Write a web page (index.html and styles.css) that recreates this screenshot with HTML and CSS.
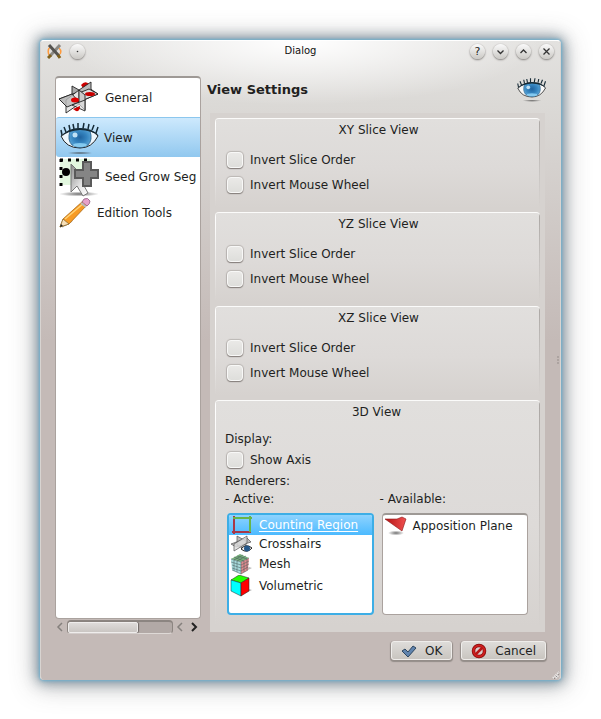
FILE: index.html
```html
<!DOCTYPE html>
<html lang="en">
<head>
<meta charset="utf-8">
<title>Dialog</title>
<link rel="stylesheet" href="styles.css">
</head>
<body>
<svg class="defs" aria-hidden="true">
  <defs>
    <linearGradient id="steel" x1="0" y1="0" x2="1" y2="1"><stop offset="0" stop-color="#808080"/><stop offset=".5" stop-color="#d5d5d5"/><stop offset="1" stop-color="#999"/></linearGradient>
    <radialGradient id="iris" cx=".5" cy=".45" r=".6"><stop offset="0" stop-color="#1f639f"/><stop offset=".5" stop-color="#3584bf"/><stop offset="1" stop-color="#62acdc"/></radialGradient>
    <radialGradient id="shade"><stop offset="0" stop-color="#333" stop-opacity=".7"/><stop offset="1" stop-color="#333" stop-opacity="0"/></radialGradient>
    <linearGradient id="cursor" x1="0" y1="0" x2="1" y2="1"><stop offset="0" stop-color="#8a8a8a"/><stop offset=".6" stop-color="#e8e8e8"/><stop offset="1" stop-color="#fff"/></linearGradient>
    <linearGradient id="ruby"><stop offset="0" stop-color="#b41414"/><stop offset="1" stop-color="#f05050"/></linearGradient>
    <symbol id="eye" viewBox="0 0 40 36">
      <ellipse cx="20" cy="33" rx="13" ry="1.500" fill="url(#shade)"/>
      <path d="M1 16Q9 9 20 9Q32 9 38 16Q32 28 20 28Q6 28 1 16Z" fill="#fff" fill-opacity=".8" stroke="#222" stroke-width="1"/>
      <path d="M10 11Q20 7 30 11Q33 20 28 25Q20 30 12 25Q7 20 10 11Z" fill="url(#iris)" stroke="#245d88" stroke-width=".8"/>
      <ellipse cx="20" cy="25" rx="7" ry="2" fill="#9de0ff" opacity=".7"/>
      <circle cx="15" cy="15" r="2.500" fill="#d8f2ff" opacity=".85"/>
      <path d="M1 17Q7 8 20 8Q33 8 39 16Q32 10.500 20 10Q8 10.500 1 17Z" fill="#152a36"/>
      <path d="M2 15L1 10M6 12L4 7M10 10L9 5M14 9L13 4M18 8.500V3M23 8.500L24 3M28 9L29 4M32 10L34 5M36 13L38 7" stroke="#152a36" stroke-width="1.500"/>
    </symbol>
  </defs>
</svg>
<main class="dialog">
  <header class="titlebar">
    <svg class="app-icon" width="15" height="15" viewBox="0 0 15 15" aria-hidden="true"><path d="M3 3Q0 6 2 11M12 4Q15 7 13 10" stroke="#ff9a3c" stroke-width="1.500" fill="none"/><path d="M13 1L3 12" stroke="#8b8984" stroke-width="3"/><path d="M2 1L12 12" stroke="#55534f" stroke-width="3"/><path d="M11 11L13 14M4 11L1 14" stroke="#80601a" stroke-width="3"/></svg>
    <button class="round" aria-label="Window menu"><svg viewBox="0 0 15 15"><circle class="dot" cx="7.500" cy="7.500" r=".8"/></svg></button>
    <h1>Dialog</h1>
    <button class="round" aria-label="Help">?</button>
    <button class="round" aria-label="Minimize"><svg viewBox="0 0 15 15"><path d="M4.500 6.500l3 3 3-3"/></svg></button>
    <button class="round" aria-label="Maximize"><svg viewBox="0 0 15 15"><path d="M4.500 9l3-3 3 3"/></svg></button>
    <button class="round" aria-label="Close"><svg viewBox="0 0 15 15"><path d="M4.500 4.500l6 6M10.500 4.500l-6 6"/></svg></button>
  </header>
  <div class="content">
    <nav class="side">
      <div class="pages">
        <button class="page"><svg width="40" height="34" viewBox="0 0 40 34"><path d="M22 4q4-5 8-1l-6 4z" fill="#c00"/><g stroke="#222" stroke-width=".9"><path d="M13 5L20 9V23L13 20Z" fill="#aaa"/><path d="M0 18L30 7L39 13L8 26Z" fill="url(#steel)"/><path d="M20 9L32 1V15L20 21Z" fill="#bbb"/><path d="M20 12L30 8L39 13L22 20Z" fill="#ddd"/><path d="M7 19L20 9V23L7 32Z" fill="#e6e6e6"/><path d="M0 18L13 13L20 21L8 26Z" fill="#bbb" fill-opacity=".8"/><path d="M20 9V23L26 29V14Z" fill="#ccc"/><path d="M13 24L26 19V30Z" fill="#ddd" fill-opacity=".7"/></g><ellipse cx="31" cy="13" rx="5" ry="2" fill="#c80000"/><ellipse cx="16" cy="19" rx="4" ry="2.500" fill="#d00"/><path d="M14 28l7-3q0 6-4 5z" fill="#c00"/></svg>General</button>
        <button class="page selected" aria-current="page"><svg width="40" height="36"><use href="#eye"/></svg>View</button>
        <button class="page"><svg width="40" height="39" viewBox="0 0 40 39"><rect x="1" y="1" width="30" height="26" fill="#e2f7df"/><path d="M1 2H32M2 1V29" stroke="#000" stroke-width="3" stroke-dasharray="3 5" fill="none"/><circle cx="7" cy="14" r="4"/><ellipse cx="20" cy="36" rx="20" ry="2.500" fill="url(#shade)"/><path d="M12 6V34L18 28L24 38L29 35L24 26L31 25Z" fill="url(#cursor)" stroke="#777"/><path d="M24 4h8v8h7v8h-7v8h-8v-8h-8v-8h8z" fill="#858585" stroke="#5a5a5a" stroke-width="2"/></svg>Seed Grow Seg</button>
        <button class="page compact"><svg width="32" height="31" viewBox="0 0 32 31"><path d="M3 30L13 24" stroke="#ccc" stroke-width="2"/><path d="M1 30L4 22L24 4L28 8L10 27Z" fill="#f79b24" stroke="#a96817" stroke-width=".8"/><path d="M6 22L25 6" stroke="#ffd478" stroke-width="1.500"/><path d="M1 30L4 22L10 27Z" fill="#f7dfb8" stroke="#80652e" stroke-width=".7"/><path d="M1 30l1-3 2 2z" fill="#222"/><path d="M23 5L25 2Q29 0 31 4Q31 7 28 9Z" fill="#e7a2cb" stroke="#8f5e83" stroke-width=".8"/><path d="M22 6L27 10" stroke="#bbb" stroke-width="2"/></svg>Edition Tools</button>
      </div>
      <div class="scroller">
        <button class="step" aria-label="Page left"><svg viewBox="0 0 8 10"><path d="M6 1L2 5l4 4"/></svg></button>
        <div class="track"><div class="thumb"></div></div>
        <button class="step" aria-label="Scroll left"><svg viewBox="0 0 8 10"><path d="M6 1L2 5l4 4"/></svg></button>
        <button class="step on" aria-label="Scroll right"><svg viewBox="0 0 8 10"><path d="M2 1l4 4-4 4"/></svg></button>
      </div>
    </nav>
    <section class="settings">
      <header class="heading"><h2>View Settings</h2><svg width="30" height="27" aria-hidden="true"><use href="#eye"/></svg></header>
      <div class="groups">
        <section class="group"><h3>XY Slice View</h3>
          <label><input type="checkbox">Invert Slice Order</label>
          <label><input type="checkbox">Invert Mouse Wheel</label></section>
        <section class="group"><h3>YZ Slice View</h3>
          <label><input type="checkbox">Invert Slice Order</label>
          <label><input type="checkbox">Invert Mouse Wheel</label></section>
        <section class="group"><h3>XZ Slice View</h3>
          <label><input type="checkbox">Invert Slice Order</label>
          <label><input type="checkbox">Invert Mouse Wheel</label></section>
        <section class="group three"><h3>3D View</h3>
          <p>Display:</p>
          <label class="axis"><input type="checkbox">Show Axis</label>
          <p>Renderers:</p>
          <div class="lists">
            <div class="column"><p id="active">- Active:</p>
              <ul class="list focus" aria-labelledby="active">
                <li class="picked"><svg width="22" height="20" viewBox="0 0 22 20"><path d="M2 17H21M4 1V19" stroke="#a83848" stroke-width="2"/><path d="M3 3H22M20 1V17" stroke="#68b548" stroke-width="2"/></svg><span>Counting Region</span></li>
                <li class="short"><svg width="22" height="18" viewBox="0 0 22 18"><g fill="#bbb" stroke="#555" stroke-width=".7"><path d="M7 1l9 5v9l-9-5zM1 9l16-6 4 4-15 5z"/><path d="M4 16V9l13-8v7z" fill="#ddd" fill-opacity=".8"/></g><path d="M11 14Q16 8 22 13Q17 19 11 14Z" fill="#f4f4f4" stroke="#222"/><circle cx="17" cy="13.500" r="3" fill="#25588a"/></svg>Crosshairs</li>
                <li><svg width="22" height="22" viewBox="0 0 22 22"><path d="M12 20l10-5-3-1z" fill="#bbb"/><path d="M1 6L10 1L19 5L11 9Z" fill="#79b17c"/><path d="M1 6L11 9V21L2 17Z" fill="#a7dadb"/><path d="M11 9L19 5L18 17L11 21Z" fill="#e28c90"/><path d="M1 6L11 9L19 5M1 9l10 3 8-4M2 12l9 3 8-4M2 15l9 3 7-4M2 17l9 4 7-4M4 7v11M7 8v11M11 9v12M14 8v11M17 6v11M4 4l10 4M7 3l10 3M16 3L7 8M13 2L4 7" fill="none" stroke="#46595a" stroke-width=".5"/></svg>Mesh</li>
                <li><svg width="22" height="22" viewBox="0 0 22 22"><path d="M12 20l10-5-3-1z" fill="#bbb"/><g stroke="#222" stroke-width=".5"><path d="M1 5L9 0L19 3L11 8Z" fill="#2f0"/><path d="M1 5L11 8V21L1 16Z" fill="#0ff"/><path d="M11 8L19 3V16L11 21Z" fill="#f00"/></g></svg>Volumetric</li>
              </ul></div>
            <div class="column"><p id="available">- Available:</p>
              <ul class="list" aria-labelledby="available">
                <li><svg width="22" height="20" viewBox="0 0 22 20"><ellipse cx="11" cy="17" rx="8" ry="2.500" fill="url(#shade)"/><path d="M0 3L12 3L17 1L21 3L17 15Z" fill="url(#ruby)" stroke="#8a1717" stroke-width=".6"/></svg>Apposition Plane</li>
              </ul></div>
          </div>
        </section>
      </div>
    </section>
  </div>
  <footer class="actions">
    <button class="push"><svg width="16" height="16" viewBox="0 0 16 16"><path d="M1 8L4 6L7 9L12 3L15 5L7 14Z" fill="#6184ae" stroke="#2d4660" stroke-linejoin="round"/></svg>OK</button>
    <button class="push"><svg width="16" height="16" viewBox="0 0 16 16"><circle cx="8" cy="8" r="5.500" fill="#dcc" stroke="#840d0d" stroke-width="3.500"/><circle cx="8" cy="8" r="5.500" fill="none" stroke="#d01f1f" stroke-width="2"/><path d="M4.500 11.500L11.500 4.500" stroke="#b91515" stroke-width="2.500"/></svg>Cancel</button>
  </footer>
  <svg class="handle" width="3" height="9" aria-hidden="true"><path d="M0 1h2M0 4h2M0 7h2" stroke="#958d8a"/></svg>
  <svg class="grip" width="8" height="8" aria-hidden="true"><path d="M1 7L7 1M4 7L7 4" stroke="#eee" stroke-width="2" stroke-dasharray="1 1"/><path d="M2 8L8 2" stroke="#777" stroke-dasharray="1 2"/></svg>
</main>
</body>
</html>
```
FILE: styles.css
```css
* { box-sizing: border-box; }
body {
  margin: 0;
  padding: 40px;
  min-height: 100vh;
  display: flex;
  background: #fff;
  color: #221f1e;
  font: 12px/16px "DejaVu Sans", sans-serif;
}
h1, h2, h3, p, ul { margin: 0; padding: 0; }
button { font: inherit; color: inherit; border: 0; padding: 0; background: none; }
svg { flex: none; }
.defs { position: absolute; width: 0; height: 0; }

.dialog {
  position: relative;
  flex: 1;
  min-width: 0;
  display: flex;
  flex-direction: column;
  border: 1px solid #d8d4d1;
  border-top-color: #fff;
  border-bottom-color: #c4bab7;
  border-radius: 4px;
  background:
    radial-gradient(ellipse 240px 64px at 50% 0, #fff, rgba(255, 255, 255, 0)),
    linear-gradient(#e3e2e0, #dbd9d6 64px, #c4bab7 300px);
  box-shadow: 0 0 3px 1px #6fb0d0, 0 0 12px 3px rgba(75, 105, 125, .6), 0 2px 24px 5px rgba(70, 70, 70, .35);
}
.titlebar { display: flex; align-items: center; gap: 8px; height: 20px; padding: 0 6px; }
.titlebar h1 { flex: 1; text-align: center; font-size: 10px; font-weight: normal; color: #111; padding-left: 46px; }
.round {
  display: grid;
  place-items: center;
  width: 15px;
  height: 15px;
  border-radius: 50%;
  background: linear-gradient(#fafafa, #cbc9c5);
  box-shadow: 0 0 1px #aaa7a3, 0 1px 2px #807d7a;
  font-size: 11px;
  line-height: 15px;
}
.round svg { width: 15px; height: 15px; fill: none; stroke: #333; stroke-width: 1.3; }
.round .dot { fill: #333; stroke: none; }

.content { flex: 1; display: flex; gap: 6px; padding: 15px 13px 0 14px; }
.side { flex: none; width: 146px; margin-bottom: -2px; display: flex; flex-direction: column; }
.pages { flex: 1; overflow: hidden; background: #fff; border: 1px solid #aaa29e; border-top: 2px solid #9e9995; border-radius: 4px; }
.page { display: flex; align-items: center; gap: 6px; width: 100%; height: 40px; padding-left: 3px; white-space: nowrap; text-align: left; }
.page:first-child { height: 39px; }
.page.selected { padding-left: 4px; gap: 4px; border-top: 1px solid #8cc7ee; border-radius: 3px 0 0 3px; background: linear-gradient(#cde9fd, #91c8ef); }
.page.compact { height: 31px; }
.scroller { display: flex; align-items: center; height: 15px; gap: 3px; padding: 0 3px 0 1px; }
.step { width: 8px; height: 10px; }
.step svg { display: block; width: 8px; height: 10px; fill: none; stroke: #85807d; stroke-width: 1.5; }
.step.on { margin-left: 3px; }
.step.on svg { stroke: #222; stroke-width: 2; }
.track { flex: 1; height: 14px; border: 1px solid #8c8581; border-top-width: 2px; border-bottom-color: #ded9d6; border-radius: 4px; background: #b2a9a6; }
.thumb { width: 67%; height: 11px; border: 1px solid #efedec; border-radius: 2px; background: linear-gradient(#dedbd9, #cac6c3); box-shadow: 1px 0 1px #6e6865; }

.settings { flex: 1; min-width: 0; display: flex; flex-direction: column; }
.heading { display: flex; justify-content: space-between; align-items: center; height: 27px; }
.heading h2 { font-size: 13px; }
.groups { flex: 1; margin: 10px 2px 0 3px; padding: 5px; background: #d6d2cf; display: flex; flex-direction: column; gap: 4px; }
.group {
  position: relative;
  height: 90px;
  padding: 3px 10px 0 12px;
  border-radius: 4px;
  border-top: 1px solid #fbfbfa;
  background: linear-gradient(#e1dfdd, #dddad8 55%, #d6d2cf);
}
.group::before {
  content: "";
  position: absolute;
  inset: 0;
  border-radius: 4px;
  background:
    linear-gradient(#fff, rgba(255, 255, 255, 0)) left / 1px 100% no-repeat,
    linear-gradient(#aaa6a3, rgba(170, 166, 163, 0)) right / 1px 100% no-repeat;
  pointer-events: none;
}
.group h3 { font-size: 12px; font-weight: normal; text-align: center; margin-bottom: 9px; }
.group label { display: flex; align-items: center; gap: 7px; height: 25px; }
.group input {
  appearance: none;
  width: 16px;
  height: 16px;
  margin: 0;
  border: 1px solid #f8f8f7;
  border-radius: 4px;
  background: linear-gradient(#eae9e7, #dededb);
  box-shadow: 0 1px 1px #857f7c, 0 0 1px 1px #bbb7b4;
}
.group.three { flex: 1; padding: 3px 12px 12px 10px; }
.group.three h3 { margin-bottom: 11px; }
.group.three .axis { height: 26px; padding-left: 2px; }
.lists { display: flex; gap: 6px; margin-top: 2px; }
.column { flex: 1; min-width: 0; }
.list { height: 102px; margin: 6px 0 0 2px; list-style: none; overflow: hidden; background: #fff; border: 1px solid #aaa29e; border-top: 2px solid #9e9995; border-radius: 4px; }
.list.focus { border: 2px solid #3daee6; }
.list li { display: flex; align-items: center; gap: 6px; height: 22px; padding-left: 2px; white-space: nowrap; }
.list.focus li { padding-left: 1px; gap: 7px; }
.list li.short { height: 18px; }
.list li.picked { height: 20px; color: #fff; background: linear-gradient(#8ed3fe, #4cbaff); text-decoration: underline; text-underline-offset: 2px; }

.actions { display: flex; justify-content: flex-end; gap: 9px; padding: 9px 14px 19px; }
.push {
  display: flex;
  align-items: center;
  gap: 8px;
  height: 19px;
  padding: 0 9px;
  border: 1px solid #efedeb;
  border-radius: 3px;
  background: linear-gradient(#dedcd9, #c9c5c0);
  box-shadow: 0 1px 1px 1px #948d89;
}
.handle { position: absolute; right: 0; top: 315px; }
.grip { position: absolute; right: 0; bottom: 0; }
```
